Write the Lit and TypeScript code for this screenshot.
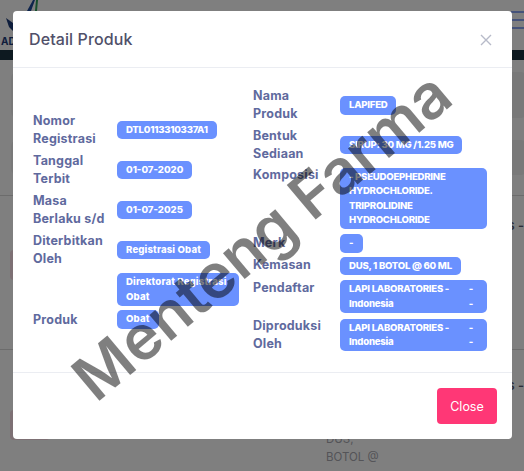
import { css, html, LitElement } from 'lit';
import { customElement } from 'lit/decorators.js';

interface Row {
    label: string[];
    value?: string[];
    dashes?: boolean;
}

const leftRows: Row[] = [
    { label: ['Nomor', 'Registrasi'], value: ['DTL0113310337A1'] },
    { label: ['Tanggal', 'Terbit'], value: ['01-07-2020'] },
    { label: ['Masa', 'Berlaku s/d'], value: ['01-07-2025'] },
    { label: ['Diterbitkan', 'Oleh'], value: ['Registrasi Obat'] },
    { label: [], value: ['Direktorat Registrasi', 'Obat'] },
    { label: ['Produk'], value: ['Obat'] },
];

const rightRows: Row[] = [
    { label: ['Nama', 'Produk'], value: ['LAPIFED'] },
    { label: ['Bentuk', 'Sediaan'], value: ['SIRUP: 30 MG /1.25 MG'] },
    { label: ['Komposisi'], value: ['- PSEUDOEPHEDRINE', 'HYDROCHLORIDE.', 'TRIPROLIDINE', 'HYDROCHLORIDE'] },
    { label: ['Merk'], value: ['-'] },
    { label: ['Kemasan'], value: ['DUS, 1 BOTOL @ 60 ML'] },
    { label: ['Pendaftar'], value: ['LAPI LABORATORIES -', 'Indonesia'], dashes: true },
    { label: ['Diproduksi', 'Oleh'], value: ['LAPI LABORATORIES -', 'Indonesia'], dashes: true },
];

// uppercase runs narrower and mixed case wider in the reference's typeface
const pillCase = (text: string) => (/[a-z]/.test(text) ? 'mixed' : /[A-Z]/.test(text) ? 'caps' : '');

@customElement('app-root')
export class AppRoot extends LitElement {
    static styles = css`
        :host {
            display: block;
            position: relative;
            width: 524px;
            height: 471px;
            overflow: hidden;
            background: #fff;
            font-family: 'Inter', 'Liberation Sans', sans-serif;
        }

        /* page behind the dialog, only slivers of it are visible */
        .page-head {
            height: 50px;
            display: flex;
            justify-content: space-between;
        }
        .logo {
            width: 40px;
            height: 50px;
        }
        .logo text {
            font: 700 10px 'Inter', sans-serif;
            fill: #1d3a78;
        }
        .burger {
            display: flex;
            flex-direction: column;
            gap: 6px;
            width: 13px;
            padding-top: 11px;
        }
        .burger span {
            height: 2px;
            background: #8ba4f4;
        }
        .page-bar {
            height: 10px;
            background: #1b3340;
        }
        .page-row {
            position: relative;
            display: flex;
            justify-content: space-between;
            height: 154px;
            box-sizing: border-box;
            border-bottom: 1px solid #d8d8d8;
        }
        .page-row.first {
            height: 136px;
        }
        .page-row.last {
            height: 122px;
            border-bottom: 0;
        }
        .heading-mark {
            width: 2px;
            height: 15px;
            margin: 90px 0 0 11px;
            background: #1d4a9a;
        }
        .side-cards {
            display: flex;
            flex-direction: column;
            gap: 22px;
            margin-top: 12px;
        }
        .side-cards div {
            width: 516px;
            height: 46px;
            border-radius: 6px;
            background: #f3f3f3;
        }
        .side-cards div + div {
            height: 35px;
        }
        .red-mark {
            width: 40px;
            height: 30px;
            margin: 54px 0 0 10px;
            border-radius: 4px;
            background: #fbe0e8;
        }
        .last .red-mark {
            margin-top: 60px;
        }
        .row-action {
            margin-top: 20px;
            font-size: 13px;
            font-weight: 600;
            line-height: 18px;
            color: #585a70;
            white-space: pre;
        }
        .last .row-action {
            margin-top: 26px;
        }
        .pack {
            position: absolute;
            left: 326px;
            top: 80px;
            font-size: 11.5px;
            line-height: 18px;
            color: #a8a8b0;
        }

        .backdrop {
            position: absolute;
            inset: 0;
            background: rgba(0, 0, 0, 0.5);
        }

        .modal {
            position: absolute;
            left: 13px;
            top: 11px;
            width: 499px;
            height: 428px;
            display: flex;
            flex-direction: column;
            box-sizing: border-box;
            background: #fff;
            border-radius: 4px;
        }
        .modal-head {
            height: 57px;
            flex: none;
            box-sizing: border-box;
            display: flex;
            align-items: center;
            justify-content: space-between;
            padding: 0 20px 1px 16px;
            border-bottom: 1px solid #ebedf2;
        }
        .modal-title {
            font-size: 16px;
            font-weight: 500;
            letter-spacing: 0.1px;
            color: #505069;
        }
        .close-x {
            display: block;
            width: 12px;
            height: 12px;
            margin-top: 3px;
        }
        .modal-body {
            flex: 1;
            display: flex;
            align-items: center;
            gap: 14px;
            padding-left: 20px;
        }
        .info {
            display: grid;
            row-gap: 3px;
        }
        .info.left {
            grid-template-columns: 84px 122px;
            grid-template-rows: 37px 37px 37px 37px 36px 18px;
        }
        .info.right {
            grid-template-columns: 87px 147px;
            grid-template-rows: 37px 36px 65px 19px 20px 35px 36px;
        }
        .label {
            font-size: 12.5px;
            font-weight: 700;
            letter-spacing: 0.2px;
            line-height: 18px;
            color: #5f6a9e;
            white-space: nowrap;
        }
        .pill {
            align-self: center;
            justify-self: start;
            box-sizing: border-box;
            padding: 2px 9px;
            border-radius: 5px;
            background: #6a91ff;
            color: #fff;
            font-size: 9.6px;
            font-weight: 800;
            line-height: 14.4px;
            white-space: nowrap;
        }
        .pill.wide {
            justify-self: stretch;
        }
        .pill.caps {
            letter-spacing: -0.25px;
        }
        .pill.mixed {
            letter-spacing: 0.15px;
        }
        .pill-line {
            display: flex;
            justify-content: space-between;
        }
        .pill-line .dash {
            margin-right: 5px;
        }

        .modal-foot {
            height: 67px;
            flex: none;
            box-sizing: border-box;
            display: flex;
            justify-content: flex-end;
            padding: 15px 15px 0 0;
            border-top: 1px solid #ebedf2;
        }
        .btn-close {
            width: 60px;
            height: 36px;
            padding: 0;
            border: 0;
            border-radius: 4px;
            background: #ff3776;
            color: #fff;
            font-family: inherit;
            font-size: 12.5px;
        }

        .watermark {
            position: absolute;
            inset: 0;
            display: flex;
            align-items: center;
            justify-content: center;
            pointer-events: none;
        }
        .watermark span {
            transform: rotate(-40deg);
            font-size: 62px;
            font-weight: 600;
            line-height: 1;
            white-space: nowrap;
            color: rgba(0, 0, 0, 0.5);
        }
    `;

    private renderRow(row: Row) {
        const lines = row.value ?? [];
        return html`
            <div class="label">${row.label.map((l) => html`<div>${l}</div>`)}</div>
            <div class="pill ${lines.length > 1 ? 'wide' : ''} ${pillCase(lines[0] ?? '')}">
                ${lines.map(
                    (v) => html`<div class="pill-line"><span>${v}</span>${row.dashes ? html`<span class="dash">-</span>` : ''}</div>`
                )}
            </div>
        `;
    }

    protected render() {
        return html`
            <div class="page-head">
                <svg class="logo" viewBox="0 0 40 50">
                    <path d="M27 11 L33 0 L35 0 L31 11 Z" fill="#1d4a9a" />
                    <path d="M35 11 L36 0 L38 0 L37 11 Z" fill="#2e9e5b" />
                    <path d="M6 18 L13 23 L13 31 L9 27 Z" fill="#1d3a78" />
                    <text x="1" y="45">AD</text>
                </svg>
                <div class="burger"><span></span><span></span><span></span></div>
            </div>
            <div class="page-bar"></div>
            <div class="page-row first">
                <div class="heading-mark"></div>
                <div class="side-cards"><div></div><div></div></div>
            </div>
            <div class="page-row">
                <div class="red-mark"></div>
                <div class="row-action">s -</div>
            </div>
            <div class="page-row last">
                <div class="red-mark"></div>
                <div class="pack">DUS,<br />BOTOL @</div>
                <div class="row-action">s -</div>
            </div>

            <div class="backdrop"></div>

            <div class="modal">
                <div class="modal-head">
                    <div class="modal-title">Detail Produk</div>
                    <svg class="close-x" viewBox="0 0 12 12">
                        <path d="M1 1 L11 11 M11 1 L1 11" stroke="#b7bac9" stroke-width="1.4" fill="none" />
                    </svg>
                </div>
                <div class="modal-body">
                    <div class="info left">${leftRows.map((r) => this.renderRow(r))}</div>
                    <div class="info right">${rightRows.map((r) => this.renderRow(r))}</div>
                </div>
                <div class="modal-foot">
                    <button class="btn-close">Close</button>
                </div>
            </div>

            <div class="watermark"><span>Menteng Farma</span></div>
        `;
    }
}
